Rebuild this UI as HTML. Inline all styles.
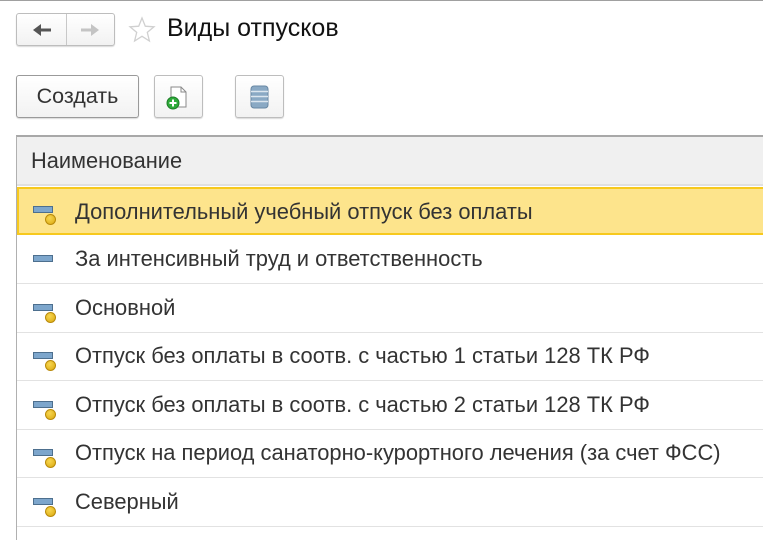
<!DOCTYPE html>
<html><head><meta charset="utf-8"><style>
*{margin:0;padding:0;box-sizing:border-box}
html,body{width:763px;height:540px;overflow:hidden}
body{background:#fff;font-family:"Liberation Sans",Arial,sans-serif;position:relative;color:#333}
.topline{position:absolute;left:0;top:0;width:763px;height:1px;background:#a0a0a0}
.btn{position:absolute;border:1px solid #bdbdbd;border-radius:3px;background:linear-gradient(#fff,#f2f2f2);box-shadow:0 1px 1px rgba(0,0,0,.15)}
.title{position:absolute;left:167px;top:14px;font-size:25px;color:#111}
.table{position:absolute;left:16px;top:135px;width:760px;height:420px;border-left:1px solid #b0b0b0;border-top:2px solid #a8a8a8}
.hdr{height:49px;background:#f0f0f0;border-bottom:2px solid #e0e0e0;font-size:21.8px;line-height:47px;padding-left:14px;color:#333}
.row{position:absolute;left:0;width:760px;height:49px;border-bottom:1px solid #e2e2e2;font-size:21.9px;line-height:48px;padding-left:58px;color:#333;white-space:nowrap}
.sel{background:#fde48c;border:2px solid #f7c91e;line-height:45px}
.bar{position:absolute;left:16px;top:20px;width:20px;height:7px;background:#7da6cc;border:1px solid #4d6f8e}
.coin{position:absolute;left:28px;top:28px;width:11px;height:11px;border-radius:50%;background:radial-gradient(circle at 40% 35%,#f8d650,#d9a80e);border:1px solid #b98a0a}
</style></head><body>
<div class="topline"></div>
<div class="btn" style="left:16px;top:13px;width:99px;height:33px"></div>
<div style="position:absolute;left:66px;top:14px;width:1px;height:31px;background:#c8c8c8"></div>
<svg style="position:absolute;left:32px;top:23px" width="22" height="14"><path d="M3 7H19" stroke="#555" stroke-width="3"/><path d="M1 7L9 1V13Z" fill="#555"/></svg>
<svg style="position:absolute;left:79px;top:23px" width="22" height="14"><path d="M2 7H18" stroke="#c4c4c4" stroke-width="3"/><path d="M20 7L12 1V13Z" fill="#c4c4c4"/></svg>
<svg style="position:absolute;left:128px;top:16px" width="28" height="28"><path d="M14 2L17.3 10.2 26 10.8 19.3 16.4 21.4 25 14 20.3 6.6 25 8.7 16.4 2 10.8 10.7 10.2Z" fill="none" stroke="#d0d0d0" stroke-width="1.3"/></svg>
<div class="title">Виды отпусков</div>
<div class="btn" style="left:16px;top:75px;width:123px;height:43px;border-color:#9a9a9a;font-size:21.5px;line-height:41px;text-align:center;color:#333">Создать</div>
<div class="btn" style="left:154px;top:75px;width:49px;height:43px"></div>
<svg style="position:absolute;left:163px;top:84px" width="30" height="28"><path d="M8 3H18L23 8V23H8Z" fill="#fff" stroke="#8a8a8a"/><path d="M18 3V8H23" fill="none" stroke="#8a8a8a"/><circle cx="10" cy="19" r="6" fill="#2eaa3a" stroke="#1d7d27"/><path d="M10 15.5V22.5M6.5 19H13.5" stroke="#fff" stroke-width="2"/></svg>
<div class="btn" style="left:235px;top:75px;width:49px;height:43px"></div>
<svg style="position:absolute;left:250px;top:85px" width="20" height="24"><rect x="1" y="1" width="17" height="22" rx="3" fill="#8aa9c4" stroke="#6887a3"/><path d="M1 6.5H18M1 11.5H18M1 16.5H18" stroke="#dce6ef" stroke-width="1.5"/></svg>
<div class="table"><div class="hdr">Наименование</div></div>
<div class="row sel" style="left:17px;top:187px;height:48px;padding-left:56px"><div class="bar" style="left:14px;top:17px"></div><div class="coin" style="left:26px;top:25px"></div>Дополнительный учебный отпуск без оплаты</div>
<div class="row" style="left:17px;top:235px"><div class="bar"></div>За интенсивный труд и ответственность</div>
<div class="row" style="left:17px;top:284px"><div class="bar"></div><div class="coin"></div>Основной</div>
<div class="row" style="left:17px;top:332px"><div class="bar"></div><div class="coin"></div>Отпуск без оплаты в соотв. с частью 1 статьи 128 ТК РФ</div>
<div class="row" style="left:17px;top:381px"><div class="bar"></div><div class="coin"></div>Отпуск без оплаты в соотв. с частью 2 статьи 128 ТК РФ</div>
<div class="row" style="left:17px;top:429px"><div class="bar"></div><div class="coin"></div>Отпуск на период санаторно-курортного лечения (за счет ФСС)</div>
<div class="row" style="left:17px;top:478px"><div class="bar"></div><div class="coin"></div>Северный</div>
</body></html>
